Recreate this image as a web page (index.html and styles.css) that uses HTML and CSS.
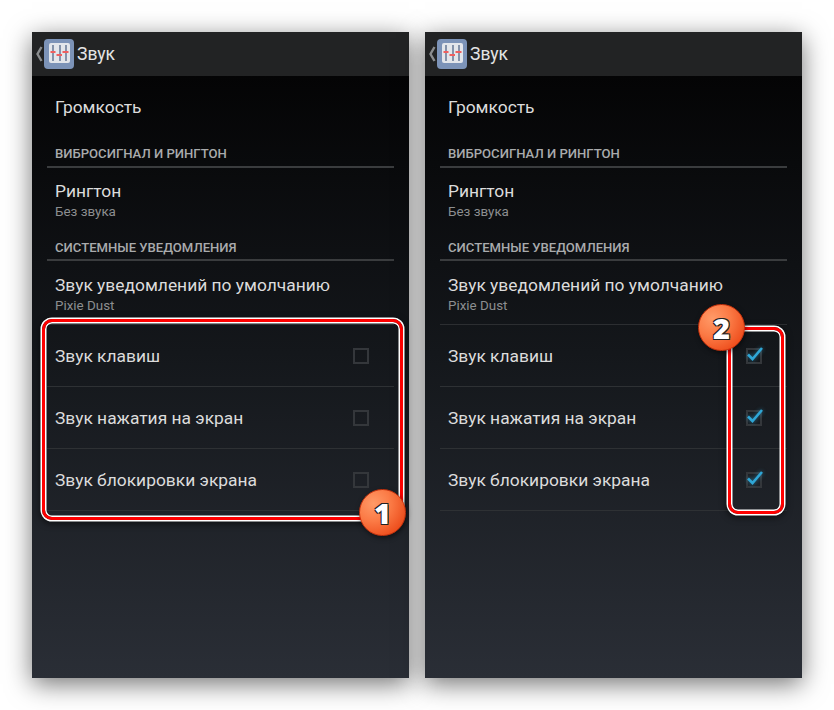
FILE: index.html
```html
<!DOCTYPE html>
<html>
<head>
	<meta charset="utf-8" />
	<title>Звук</title>
	<link rel="stylesheet" href="styles.css">
</head>
<body>
	<div class="phone">
		<div class="actionbar">
			<svg class="back" width="7" height="16" viewBox="0 0 7 16"><path d="M5.5 1 L1.5 8 L5.5 15" fill="none" stroke="#8b8d8f" stroke-width="2.4"/></svg>
			<svg class="appicon" width="30" height="30" viewBox="0 0 30 30">
				<rect x="0" y="0" width="30" height="30" rx="4" fill="#7c93b8"/>
				<rect x="5" y="4" width="21" height="20" rx="2" fill="#e3e6eb"/>
				<path d="M9 6V22M16 6V22M22 6V22" stroke="#6d7f9b" stroke-width="1.6"/>
				<path d="M6.5 13H11.500M12.500 16H18M18.500 13H24.500" stroke="#ef5f5f" stroke-width="2.200"/>
			</svg>
			<span class="title">Звук</span>
		</div>
		<div class="list">
			<div class="item single"><span class="label">Громкость</span></div>
			<div class="section first">ВИБРОСИГНАЛ И РИНГТОН</div>
			<div class="item double ringtone"><span class="label">Рингтон</span><span class="sub">Без звука</span></div>
			<div class="section">СИСТЕМНЫЕ УВЕДОМЛЕНИЯ</div>
			<div class="item double sound"><span class="label">Звук уведомлений по умолчанию</span><span class="sub">Pixie Dust</span></div>
			<div class="row"><span class="label">Звук клавиш</span><span class="check"></span></div>
			<div class="row"><span class="label">Звук нажатия на экран</span><span class="check"></span></div>
			<div class="row"><span class="label">Звук блокировки экрана</span><span class="check"></span></div>
		</div>
		<div class="mark mark-one"></div>
		<div class="badge badge-one">1</div>
	</div>
	<div class="phone">
		<div class="actionbar">
			<svg class="back" width="7" height="16" viewBox="0 0 7 16"><path d="M5.5 1 L1.5 8 L5.5 15" fill="none" stroke="#8b8d8f" stroke-width="2.4"/></svg>
			<svg class="appicon" width="30" height="30" viewBox="0 0 30 30">
				<rect x="0" y="0" width="30" height="30" rx="4" fill="#7c93b8"/>
				<rect x="5" y="4" width="21" height="20" rx="2" fill="#e3e6eb"/>
				<path d="M9 6V22M16 6V22M22 6V22" stroke="#6d7f9b" stroke-width="1.6"/>
				<path d="M6.5 13H11.500M12.500 16H18M18.500 13H24.500" stroke="#ef5f5f" stroke-width="2.200"/>
			</svg>
			<span class="title">Звук</span>
		</div>
		<div class="list">
			<div class="item single"><span class="label">Громкость</span></div>
			<div class="section first">ВИБРОСИГНАЛ И РИНГТОН</div>
			<div class="item double ringtone"><span class="label">Рингтон</span><span class="sub">Без звука</span></div>
			<div class="section">СИСТЕМНЫЕ УВЕДОМЛЕНИЯ</div>
			<div class="item double sound"><span class="label">Звук уведомлений по умолчанию</span><span class="sub">Pixie Dust</span></div>
			<div class="row"><span class="label">Звук клавиш</span><span class="check"><svg class="tick" width="20" height="18" viewBox="0 0 20 18"><path d="M3 9.500 L7.500 14 L17 3" fill="none" stroke="#2fa6d6" stroke-width="2.600"/></svg></span></div>
			<div class="row"><span class="label">Звук нажатия на экран</span><span class="check"><svg class="tick" width="20" height="18" viewBox="0 0 20 18"><path d="M3 9.500 L7.500 14 L17 3" fill="none" stroke="#2fa6d6" stroke-width="2.600"/></svg></span></div>
			<div class="row"><span class="label">Звук блокировки экрана</span><span class="check"><svg class="tick" width="20" height="18" viewBox="0 0 20 18"><path d="M3 9.500 L7.500 14 L17 3" fill="none" stroke="#2fa6d6" stroke-width="2.600"/></svg></span></div>
		</div>
		<div class="mark mark-two"></div>
		<div class="badge badge-two">2</div>
	</div>
</body>
</html>
```
FILE: styles.css
```css
body {
	margin: 0;
	padding: 32px;
	height: 710px;
	box-sizing: border-box;
	overflow: hidden;
	display: flex;
	gap: 16px;
	background: #fff;
	font-family: Roboto, sans-serif;
}

.phone {
	position: relative;
	width: 377px;
	height: 646px;
	flex: none;
	background: linear-gradient(#040405 44px, #14171b 320px, #2a2e36 100%);
	box-shadow: 0 6px 24px rgba(0, 0, 0, 0.55);
}

.actionbar {
	height: 44px;
	background: #222324;
	display: flex;
	align-items: center;
	padding-left: 4px;
}

.back {
	flex: none;
}

.appicon {
	flex: none;
	margin-left: 1px;
}

.title {
	margin-left: 3px;
	font-size: 17.5px;
	color: #e4e4e4;
}

.list {
	padding: 0 15px;
}

.label {
	font-size: 17.4px;
	line-height: 20px;
	color: #dcdcdc;
}

.item {
	padding: 0 8px;
	display: flex;
	flex-direction: column;
}

.single {
	height: 62px;
	justify-content: center;
}

.section {
	height: 30px;
	box-sizing: border-box;
	padding: 9px 8px 0;
	border-bottom: 2px solid #3a3c3e;
	font-size: 13.1px;
	line-height: 16px;
	font-weight: 500;
	color: #a9abad;
}

.section.first {
	padding-top: 8px;
}

.ringtone {
	height: 63px;
	box-sizing: border-box;
	padding-top: 13px;
}

.sound {
	height: 64px;
	box-sizing: border-box;
	padding-top: 14px;
	border-bottom: 1px solid #2c2e31;
}

.sub {
	font-size: 13.4px;
	line-height: 15px;
	margin-top: 3px;
	color: #8c8e90;
}

.row {
	height: 61px;
	padding: 0 25px 0 8px;
	border-bottom: 1px solid #2e3134;
	display: flex;
	align-items: center;
	justify-content: space-between;
}

.check {
	position: relative;
	width: 16px;
	height: 16px;
	box-sizing: border-box;
	border: 2px solid #34373b;
}

.tick {
	position: absolute;
	left: -3px;
	top: -5px;
	filter: drop-shadow(0 0 2px rgba(51, 181, 229, 0.55));
}

.mark {
	position: absolute;
	box-sizing: border-box;
	border: 3px solid #f00;
	border-radius: 10px;
	box-shadow: 0 0 0 1.5px #fff, inset 0 0 0 1.5px #fff, 0 2px 6px 2px rgba(0, 0, 0, 0.5);
}

.mark-one {
	left: 10px;
	top: 287px;
	width: 361px;
	height: 201px;
}

.mark-two {
	left: 303px;
	top: 295px;
	width: 56px;
	height: 187px;
}

.badge {
	position: absolute;
	width: 47px;
	height: 47px;
	box-sizing: border-box;
	border-radius: 50%;
	border: 1px solid #c8320c;
	background: radial-gradient(circle at 30% 30%, #ff9a68 0%, #fb7a45 40%, #ee4d1c 80%, #e23c0e 100%);
	box-shadow: 1px 2px 5px rgba(0, 0, 0, 0.5);
	display: flex;
	align-items: center;
	justify-content: center;
	font-family: "Open Sans", sans-serif;
	font-size: 29px;
	font-weight: 800;
	color: #fff;
	text-shadow: -1px -1px 0 #222, 1px -1px 0 #222, -1px 1px 0 #222, 1px 1px 0 #222;
}

.badge-one {
	left: 327px;
	top: 457px;
}

.badge-two {
	left: 273px;
	top: 272px;
}
```
